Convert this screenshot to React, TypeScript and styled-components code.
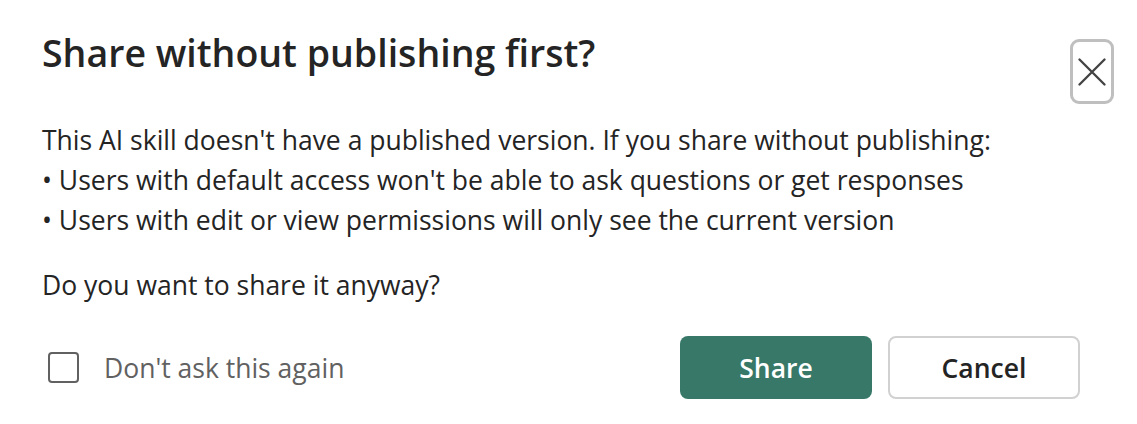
import React from "react";
import styled, { createGlobalStyle } from "styled-components";

const Global = createGlobalStyle`
  html, body { margin: 0; padding: 0; background: #ffffff; }
  body { font-family: "Open Sans", "Noto Sans", "Liberation Sans", sans-serif; color: #242424; }
  * { box-sizing: border-box; }
`;

const Surface = styled.div`
  width: 1137px;
  height: 424px;
  padding: 25px 57px 0 42px;
  background: #ffffff;
`;

const Header = styled.div`
  display: flex;
  justify-content: space-between;
  align-items: flex-start;
`;

const Title = styled.h2`
  margin: 0;
  font-size: 37.5px;
  line-height: 56px;
  font-weight: 600;
  color: #242424;
`;

const CloseButton = styled.button`
  width: 44px;
  height: 65px;
  margin-top: 14px;
  margin-bottom: -23px;
  margin-right: -34px;
  padding: 0;
  display: flex;
  align-items: center;
  justify-content: center;
  background: #ffffff;
  border: 3px solid #bfbfbf;
  border-radius: 9px;
  cursor: pointer;
`;

const Content = styled.div`
  margin-top: 39px;
  font-size: 26.5px;
  line-height: 40px;
  color: #242424;
`;

const Paragraph = styled.p<{ $gap?: number }>`
  margin: ${(p) => p.$gap ?? 0}px 0 0 0;
`;

const Line = styled.span`
  display: block;
`;

const Footer = styled.div`
  margin-top: 31px;
  display: flex;
  justify-content: space-between;
  align-items: center;
`;

const CheckLabel = styled.label`
  display: flex;
  align-items: center;
  gap: 25px;
  margin-left: 6px;
  font-size: 26.5px;
  color: #616161;
  cursor: pointer;
`;

const Box = styled.span`
  width: 31px;
  height: 31px;
  border: 2.5px solid #616161;
  border-radius: 4px;
  display: inline-block;
`;

const Actions = styled.div`
  display: flex;
  gap: 16px;
`;

const Button = styled.button<{ $primary?: boolean }>`
  width: 192px;
  height: 63px;
  border-radius: 8px;
  font-family: inherit;
  font-size: 26.5px;
  font-weight: 600;
  cursor: pointer;
  background: ${(p) => (p.$primary ? "#377868" : "#ffffff")};
  color: ${(p) => (p.$primary ? "#ffffff" : "#242424")};
  border: ${(p) => (p.$primary ? "none" : "2px solid #d1d1d1")};
`;

export default function App() {
  return (
    <>
      <Global />
      <Surface>
        <Header>
          <Title>Share without publishing first?</Title>
          <CloseButton aria-label="Close">
            <svg width="28" height="28" viewBox="0 0 28 28">
              <path d="M1.5 1.5 L26.5 26.5 M26.5 1.5 L1.5 26.5" stroke="#424242" strokeWidth="2.3" strokeLinecap="round" fill="none" />
            </svg>
          </CloseButton>
        </Header>
        <Content>
          <Paragraph>
            <Line>This AI skill doesn't have a published version. If you share without publishing:</Line>
            <Line>• Users with default access won't be able to ask questions or get responses</Line>
            <Line>• Users with edit or view permissions will only see the current version</Line>
          </Paragraph>
          <Paragraph $gap={25}>Do you want to share it anyway?</Paragraph>
        </Content>
        <Footer>
          <CheckLabel>
            <Box />
            Don't ask this again
          </CheckLabel>
          <Actions>
            <Button $primary>Share</Button>
            <Button>Cancel</Button>
          </Actions>
        </Footer>
      </Surface>
    </>
  );
}
